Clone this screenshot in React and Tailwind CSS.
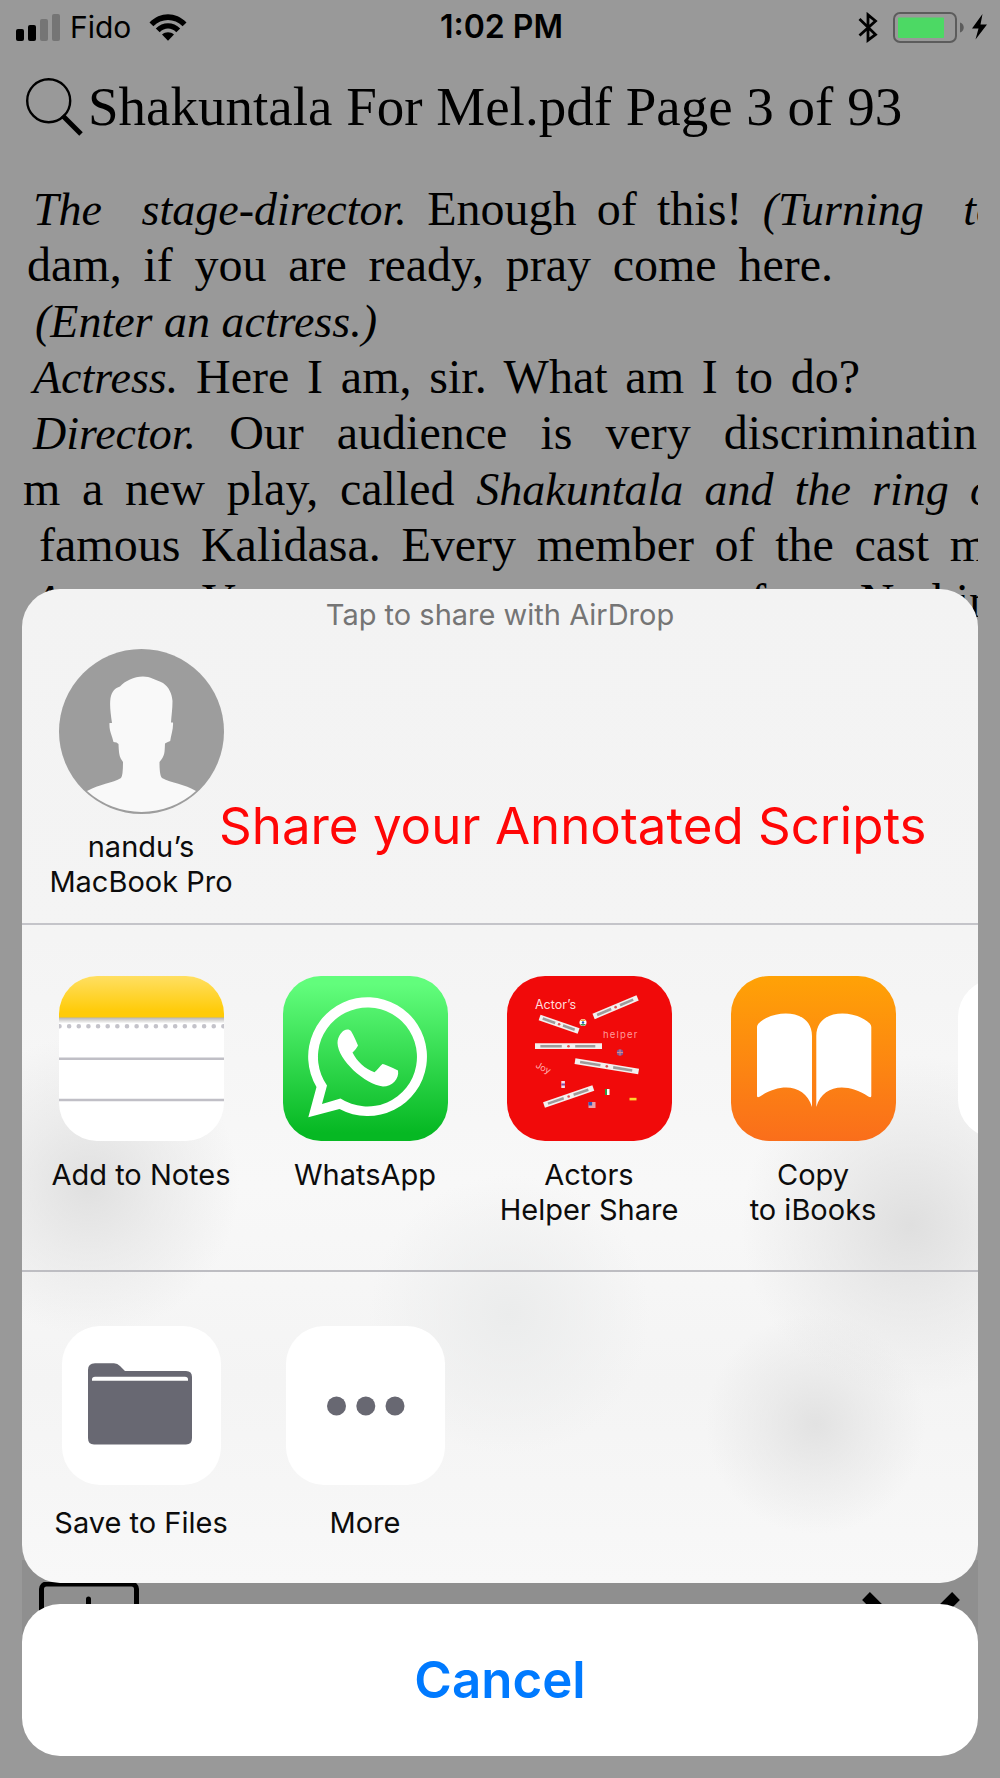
import { useState } from 'react';
import { clsx } from 'clsx';

const scriptLines = [
  { width: 'w-[966px] ml-[11px]', parts: [['The \u00a0stage-director.', true], [' Enough of this! '], ['(Turning \u00a0to', true]] },
  { width: 'w-[806px] ml-[5px]', parts: [['dam, if you are ready, pray come here.']] },
  { width: 'w-[340px] ml-[13px]', parts: [['(Enter an actress.)', true]] },
  { width: 'w-[827px] ml-[11px]', parts: [['Actress.', true], [' Here I am, sir. What am I to do?']] },
  { width: 'w-[944px] ml-[11px]', parts: [['Director.', true], [' Our audience is very discriminatin']] },
  { width: 'w-[970px] ml-[1px]', parts: [['m a new play, called '], ['Shakuntala and the ring o', true]] },
  { width: 'w-[948px] ml-[17px]', parts: [['famous Kalidasa. Every member of the cast m']] },
  { width: 'w-[960px] ml-[11px]', parts: [['Actress.', true], [' Your arrangements are perfect. Nothin']] },
];

const SignalIcon = () => (
  <svg viewBox="0 0 44 27" className="w-11 h-[27px]">
    <rect x="0" y="15" width="8" height="12" rx="2" />
    <rect x="12" y="11" width="8" height="16" rx="2" />
    <rect x="24" y="5" width="8" height="22" rx="2" fill="#757575" />
    <rect x="36" y="0" width="8" height="27" rx="2" fill="#757575" />
  </svg>
);

const WifiIcon = () => (
  <svg viewBox="0 0 38 27" className="w-[38px] h-[27px]">
    <path d="M0.5 8.5C11-2.5 27-2.5 37.5 8.5L33.6 12.3C25.5 4 12.500 4 4.400 12.300Z" />
    <path d="M6.800 14.500C13.500 7.600 24.500 7.600 31.200 14.500L27.300 18.200C22.500 13.400 15.500 13.400 10.700 18.200Z" />
    <path d="M13 20.600C16.500 17.400 21.500 17.400 25 20.600L19 26.800Z" />
  </svg>
);

const BluetoothIcon = () => (
  <svg viewBox="0 0 20 31" className="w-5 h-[31px]" fill="none" stroke="#000" strokeWidth="2.8">
    <path d="M1.500 7L17.500 22.500L10 28.200V2.800L17.500 9L1.500 23.500" />
  </svg>
);

const BatteryIcon = () => (
  <svg viewBox="0 0 72 31" className="w-[72px] h-[31px]">
    <rect x="1" y="1" width="62" height="29" rx="6" fill="none" stroke="#5c5c5c" strokeWidth="2" />
    <rect x="5" y="5.500" width="46" height="20.500" rx="1" fill="#4cd964" />
    <path d="M67 10.500C72 12 72 19 67 20.500Z" fill="#5c5c5c" />
  </svg>
);

const BoltIcon = () => (
  <svg viewBox="0 0 15 26" className="w-[15px] h-[26px]">
    <path d="M10.500 0L0 14.500H6.500L3.500 25.500L15 10.500H8.500Z" />
  </svg>
);

const SearchIcon = () => (
  <svg viewBox="0 0 58 58" className="w-[58px] h-[58px]" fill="none" stroke="#000">
    <circle cx="22.700" cy="22.700" r="21.500" strokeWidth="2.400" />
    <path d="M36.500 37.500L55 56" strokeWidth="5" />
  </svg>
);

const Avatar = () => (
  <svg viewBox="0 0 165 165" className="w-[165px] h-[165px]">
    <circle cx="82.500" cy="82.500" r="82.500" fill="#9d9d9d" />
    <path
      fill="#f9f9f9"
      d="M28 142C40 135 54 134 62 129Q64 127 64 113C61 108 60 108 59.500 95Q58 93 54.500 93C53 86 50 82 50.500 74H53C51.500 64 50.500 56 51.500 49C53 42 56 39 61 37.500C66 32 75 27.500 84 27.500C91 27.500 97 31 104 34C110 38 113 45 113.500 52C113.500 60 112.500 66 112 73.500H114C114.500 80 112 86 111.200 92Q108 93 106 94.500C105.500 105 106 106 100.500 113C100.500 120 101 127 103 129C112 134 126 135 137 142A81.500 81.500 0 0 1 28 142Z"
    />
  </svg>
);

const NotesIcon = () => (
  <svg viewBox="0 0 165 165" className="w-[165px] h-[165px] rounded-[38px] bg-white">
    <defs>
      <linearGradient id="notes" x2="0" y2="1">
        <stop offset="0" stopColor="#ffdf62" />
        <stop offset="0.850" stopColor="#ffcb07" />
      </linearGradient>
      <linearGradient id="notesShade" x2="0" y2="1">
        <stop offset="0" stopColor="#b5b3b0" />
        <stop offset="1" stopColor="#fff" />
      </linearGradient>
    </defs>
    <rect width="165" height="42" fill="url(#notes)" />
    <rect y="41.500" width="165" height="6" fill="url(#notesShade)" />
    <path d="M0.500 50.200H166" stroke="#c4c3ca" strokeWidth="4.600" strokeLinecap="round" strokeDasharray="0 9.640" />
    <path d="M0 82.700H165M0 124H165" stroke="#c0bfc6" strokeWidth="2.600" />
  </svg>
);

const WhatsAppIcon = () => (
  <svg viewBox="0 0 165 165" className="w-[165px] h-[165px] rounded-[38px]">
    <defs>
      <linearGradient id="whatsapp" x2="0" y2="1">
        <stop offset="0.050" stopColor="#62fd7c" />
        <stop offset="0.950" stopColor="#06b823" />
      </linearGradient>
    </defs>
    <rect width="165" height="165" fill="url(#whatsapp)" />
    <path
      fill="#fff"
      fillRule="evenodd"
      d="M33.500 111A59.400 59.400 0 1 1 56.500 133L25.300 141.300ZM44 109.500L39 128L57.500 122.500A49.500 49.500 0 1 0 44 109.500Z"
    />
    <path
      fill="#fff"
      d="M61 54.500C63.500 53 66.500 53 68.300 55.500C71 60 73 65 75 69.500C74 72 71.500 74.500 69.500 76.500C74 85.500 82 93 91.500 96.300C94.500 94 97 90 99.500 88Q101 87.500 115 94.500C116.500 103 109 110.500 100 110.500C82 108.500 55 84 54.500 67C54.500 61 58 56.500 61 54.500Z"
    />
  </svg>
);

const strips = [
  [32.6, 41.5, 71.6, 55],
  [86.6, 40.5, 130.6, 21.8],
  [28, 70.2, 95, 70.2],
  [68, 85.2, 131.6, 95.5],
  [37, 129, 86.3, 112],
];

const ActorsHelperIcon = () => (
  <svg viewBox="0 0 165 165" className="w-[165px] h-[165px] rounded-[38px] bg-[#f10a0a]">
    <g fontFamily="Inter, sans-serif" fill="#ffdcdc">
      <text x="28" y="33" fontSize="12.500">Actor’s</text>
      <text x="96" y="62" fontSize="9.500" letterSpacing="1.200" fill="#ff9b9b">helper</text>
      <text x="28" y="91" fontSize="9" fill="#ffb0b0" transform="rotate(28 28 91)">Joy</text>
    </g>
    {strips.map(([x1, y1, x2, y2]) => (
      <g key={y1}>
        <line x1={x1} y1={y1} x2={x2} y2={y2} stroke="#f3f0ef" strokeWidth="5.800" />
        <line x1={x1} y1={y1} x2={x2} y2={y2} pathLength="100" stroke="#a09a9a" strokeWidth="2.600" strokeDasharray="0 8 32 20 30 10" />
        <circle cx={(x1 + x2) / 2} cy={(y1 + y2) / 2} r="1.300" fill="#e05050" />
      </g>
    ))}
    <circle cx="76" cy="46.500" r="3.500" fill="#fff" />
    <path d="M73 45A3.500 3.500 0 0 1 79 45Z" fill="#f2a33a" />
    <path d="M73 48A3.500 3.500 0 0 0 79 48Z" fill="#3a9a4a" />
    <circle cx="76" cy="46.500" r="1.200" fill="#2850b0" />
    <circle cx="113" cy="76.500" r="3.200" fill="#7a5a9a" />
    <path d="M110 76.500H116M113 73.500V79.500" stroke="#d88" strokeWidth="1" />
    <rect x="54.300" y="105" width="3.600" height="7" fill="#f5dfe8" />
    <path d="M54.300 108.500H58" stroke="#8a4aa0" strokeWidth="2" />
    <rect x="98" y="113" width="2" height="6" fill="#2f9a45" />
    <rect x="100" y="113" width="2.500" height="6" fill="#fff" />
    <rect x="81.500" y="126" width="7" height="6" fill="#e8a0a8" />
    <rect x="81.500" y="126" width="3.600" height="3.500" fill="#3558b8" />
    <rect x="122.500" y="121.800" width="7" height="2.600" fill="#ffd52e" />
  </svg>
);

const BooksIcon = () => (
  <svg viewBox="0 0 165 165" className="w-[165px] h-[165px] rounded-[38px]">
    <defs>
      <linearGradient id="books" x2="0" y2="1">
        <stop offset="0" stopColor="#ffa206" />
        <stop offset="1" stopColor="#fa6e1b" />
      </linearGradient>
    </defs>
    <rect width="165" height="165" fill="url(#books)" />
    <g fill="#fff">
      <path d="M26 51Q26 49 27.500 47.500C42 33 81 32 81 60V131C74 109 51 106 29 120.500Q26 122 26 120Z" />
      <path d="M140.300 51Q140.300 49 138.800 47.500C124 33 85.300 32 85.300 60V131C92 109 115 106 137.300 120.500Q140.300 122 140.300 120Z" />
    </g>
  </svg>
);

const FilesIcon = () => (
  <svg viewBox="0 0 159 159" className="w-[159px] h-[159px] rounded-[38px] bg-white">
    <path fill="#686872" d="M26 44Q26 37.300 33 37.300H52Q55.500 37.300 58 40L63 45H124Q130 45 130 51V112Q130 118.500 124 118.500H32Q26 118.500 26 112Z" />
    <path fill="#fff" d="M30 54.800V53.500Q30 50.800 33 50.800H123Q126 50.800 126 53.500V54.800Z" />
  </svg>
);

const MoreIcon = () => (
  <svg viewBox="0 0 159 159" className="w-[159px] h-[159px] rounded-[38px] bg-white" fill="#686872">
    <circle cx="50.500" cy="80" r="9.500" />
    <circle cx="79.800" cy="80" r="9.500" />
    <circle cx="109" cy="80" r="9.500" />
  </svg>
);

const apps = [
  { label: ['Add to Notes'], Icon: NotesIcon },
  { label: ['WhatsApp'], Icon: WhatsAppIcon },
  { label: ['Actors', 'Helper Share'], Icon: ActorsHelperIcon },
  { label: ['Copy', 'to iBooks'], Icon: BooksIcon },
];

const actions = [
  { label: ['Save to Files'], Icon: FilesIcon },
  { label: ['More'], Icon: MoreIcon },
];

const ShareItem = ({ label, Icon, className }) => (
  <button className={clsx('w-56 shrink-0 flex flex-col items-center text-[29px] leading-[35px] text-[#0c0c0c]', className)}>
    <Icon />
    <span>
      {label.map((line) => (
        <span key={line} className="block whitespace-nowrap">{line}</span>
      ))}
    </span>
  </button>
);

const ShareSheet = ({ onClose }) => (
  <div className="absolute inset-x-0 bottom-0 px-[22px] pb-[22px] flex flex-col gap-[21px]">
    <div className="rounded-[38px] overflow-hidden bg-[#f5f5f5] bg-[radial-gradient(circle_at_7%_60%,#e0e0e0,#e0e0e080_70px,transparent_150px),radial-gradient(circle_at_93%_64%,#dfdfdf,#dfdfdf80_80px,transparent_170px),radial-gradient(circle_at_51%_73%,#ebecec,#ebecec80_70px,transparent_140px),radial-gradient(circle_at_83%_84%,#e2e2e2,#e2e2e280_50px,transparent_110px),linear-gradient(#f3f3f3,#f4f4f4_35%,#f8f8f8_60%,#f4f4f4_80%,#f8f8f8)]">
      <section className="relative pt-2 pb-6 border-b-2 border-[#c4c4c9]">
        <h2 className="text-center text-[29px] leading-[35px] text-[#757575]">Tap to share with AirDrop</h2>
        <div className="flex pl-[7px] mt-[17px]">
          <ShareItem label={['nandu’s', 'MacBook Pro']} Icon={Avatar} className="gap-[15px]" />
        </div>
        <p className="absolute left-[197px] top-[207px] whitespace-nowrap text-[51px] leading-[60px] text-[#ff0606]">
          Share your Annotated Scripts
        </p>
      </section>

      <section className="flex overflow-hidden pl-[7px] pt-[51px] pb-[43px] border-b-2 border-[#bdbdc2]">
        {apps.map((app) => (
          <ShareItem key={app.label[0]} {...app} className="gap-4" />
        ))}
        {/* next app, scrolled off the edge */}
        <div className="w-56 shrink-0 flex justify-center pt-[3px]">
          <div className="w-[159px] h-[159px] rounded-[38px] bg-white" />
        </div>
      </section>

      <section className="flex pl-[7px] pt-[54px] pb-[43px]">
        {actions.map((action) => (
          <ShareItem key={action.label[0]} {...action} className="gap-5" />
        ))}
      </section>
    </div>

    <button onClick={onClose} className="h-[152px] rounded-[38px] bg-white text-[51px] font-semibold text-[#007aff]">
      Cancel
    </button>
  </div>
);

const App = () => {
  const [isSharing, setIsSharing] = useState(true);

  return (
    <div className="relative min-h-screen flex flex-col overflow-hidden bg-[#999] text-black font-[Inter,sans-serif]">
      <div className="grid grid-cols-3 items-center h-[54px] pl-4 pr-[13px] text-[30px] leading-9">
        <div className="flex items-center">
          <SignalIcon />
          <span className="ml-[10px] mr-[18px]">Fido</span>
          <WifiIcon />
        </div>
        <span className="text-center text-[32px] font-semibold">1:02 PM</span>
        <div className="flex items-center justify-end">
          <BluetoothIcon />
          <span className="ml-[15px] mr-[7px]"><BatteryIcon /></span>
          <BoltIcon />
        </div>
      </div>

      <header className="flex items-center h-[106px] pl-[26px] font-['Liberation_Serif',serif]">
        <button aria-label="Search"><SearchIcon /></button>
        <h1 className="ml-1 text-[55px] leading-[60px] whitespace-nowrap">Shakuntala For Mel.pdf Page 3 of 93</h1>
      </header>

      <main className="flex-1 mx-[22px] pt-[21px] overflow-hidden font-['Liberation_Serif',serif] text-[48px] leading-[56px]">
        {scriptLines.map(({ width, parts }) => (
          <p key={parts[0][0] + width} className={clsx('h-14 whitespace-nowrap [text-align-last:justify]', width)}>
            {parts.map(([text, italic]) => (italic ? <i key={text} className="text-[46px]">{text}</i> : text))}
          </p>
        ))}
      </main>

      <footer className="flex justify-between h-[180px] mx-[22px] mb-[38px] pl-[17px] pr-[17px] pt-[22px] bg-[linear-gradient(#8f8f8f_60%,#999)]">
        <button aria-label="Add" onClick={() => setIsSharing(true)} className="self-start">
          <svg viewBox="0 0 100 100" className="w-[100px] h-[100px]" fill="none" stroke="#000" strokeWidth="5">
            <rect x="2.500" y="2" width="95" height="95" rx="5" />
            <path d="M49.500 17V83M17 50H83" strokeLinecap="round" />
          </svg>
        </button>
        <button aria-label="Close" className="self-start pt-[10px]">
          <svg viewBox="0 0 100 100" className="w-[100px] h-[100px]" stroke="#000" strokeWidth="11">
            <path d="M5 4L95 94M95 4L5 94" />
          </svg>
        </button>
      </footer>

      {isSharing && <ShareSheet onClose={() => setIsSharing(false)} />}
    </div>
  );
};

export default App;
